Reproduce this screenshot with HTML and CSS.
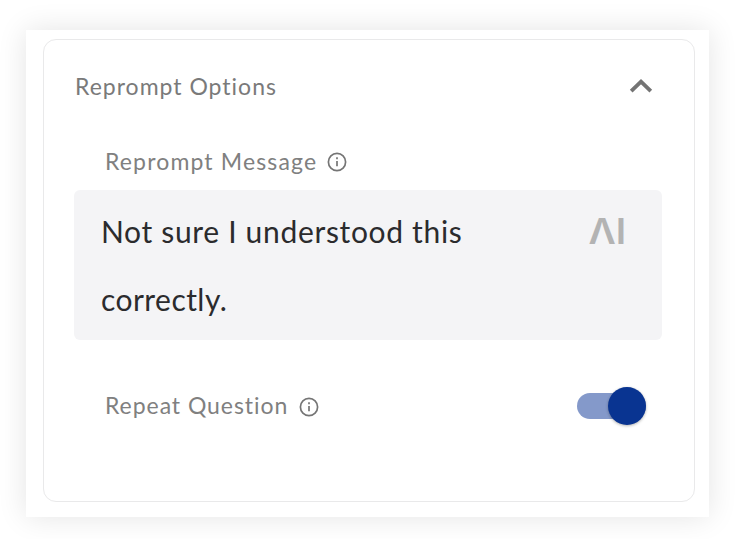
FILE: index.html
```html
<!DOCTYPE html>
<html lang="en">
<head>
<meta charset="utf-8">
<title>Reprompt Options</title>
<link rel="stylesheet" href="styles.css">
</head>
<body>
<main class="card">
  <section class="panel">
    <header class="panel-header">
      <h2 class="title">Reprompt Options</h2>
      <svg class="chevron" viewBox="0 0 24 16"><path d="M2.2 13.2 12 3.6l9.8 9.6" fill="none" stroke="#747474" stroke-width="3.8"/></svg>
    </header>
    <div class="label-row message-row">
      <span class="label message-label">Reprompt Message</span>
      <svg class="info" viewBox="0 0 20 20"><circle cx="10" cy="10" r="8.6"/><path d="M10 9v5.2M10 5.3v2"/></svg>
    </div>
    <div class="field">
      <p class="message">Not sure I understood this <span class="last-word">correctly.</span></p>
      <span class="ai">ΛI</span>
    </div>
    <div class="label-row repeat-row">
      <span class="label repeat-label">Repeat Question</span>
      <svg class="info" viewBox="0 0 20 20"><circle cx="10" cy="10" r="8.6"/><path d="M10 9v5.2M10 5.3v2"/></svg>
      <span class="toggle"><span class="knob"></span></span>
    </div>
  </section>
</main>
</body>
</html>
```

FILE: styles.css
```css
* { box-sizing: border-box; }
body {
  margin: 0;
  padding: 30px 26px 22px;
  height: 539px;
  overflow: hidden;
  background: #fff;
  font-family: Lato, "Open Sans", sans-serif;
}
.card {
  height: 487px;
  padding: 9px 14px 15px 17px;
  background: #fff;
  box-shadow: 0 0 28px rgba(0, 0, 0, 0.11);
}
.panel {
  height: 463px;
  padding: 0 32px 0 30px;
  border: 1.5px solid #e9e9ea;
  border-radius: 13px;
}
.panel-header {
  display: flex;
  align-items: center;
  justify-content: space-between;
  height: 93px;
  padding-right: 9px;
}
.title, .label {
  margin: 0;
  padding-bottom: 2px;
  font-size: 23px;
  line-height: 28px;
  font-weight: 400;
  color: #808080;
  white-space: nowrap;
}
.title { padding-left: 1px; letter-spacing: 1px; color: #7a7a7a; }
.message-label { letter-spacing: 1.15px; }
.repeat-label { letter-spacing: 0.95px; }
.chevron { width: 24px; height: 16px; margin-bottom: 1px; }
.label-row {
  display: flex;
  align-items: center;
  padding-left: 31px;
}
.message-row { height: 57px; }
.info {
  width: 20px;
  height: 20px;
  margin: 1px 0 0 11px;
  fill: none;
  stroke: #757575;
  stroke-width: 1.7;
}
.message-row .info { margin-left: 10px; }
.field {
  display: flex;
  justify-content: space-between;
  height: 150px;
  padding: 7px 36px 0 27px;
  border-radius: 6px;
  background: #f4f4f6;
}
.message {
  width: 385px;
  margin: 0;
  font-size: 30px;
  line-height: 68px;
  letter-spacing: 0.67px;
  color: #2b2b2d;
}
.last-word { letter-spacing: 0.45px; }
.ai {
  font: 600 35px/68px Inter, sans-serif;
  color: #b3b3b3;
  transform: scaleX(1.07);
  transform-origin: right;
}
.repeat-row { height: 132px; padding-right: 16px; }
.toggle {
  display: flex;
  align-items: center;
  justify-content: flex-end;
  width: 69px;
  height: 26px;
  margin-left: auto;
  border-radius: 13px;
  background: #8499ca;
}
.knob {
  width: 38px;
  height: 38px;
  border-radius: 50%;
  background: #093491;
  box-shadow: 0 1px 3px rgba(0, 0, 0, 0.3);
}
```
